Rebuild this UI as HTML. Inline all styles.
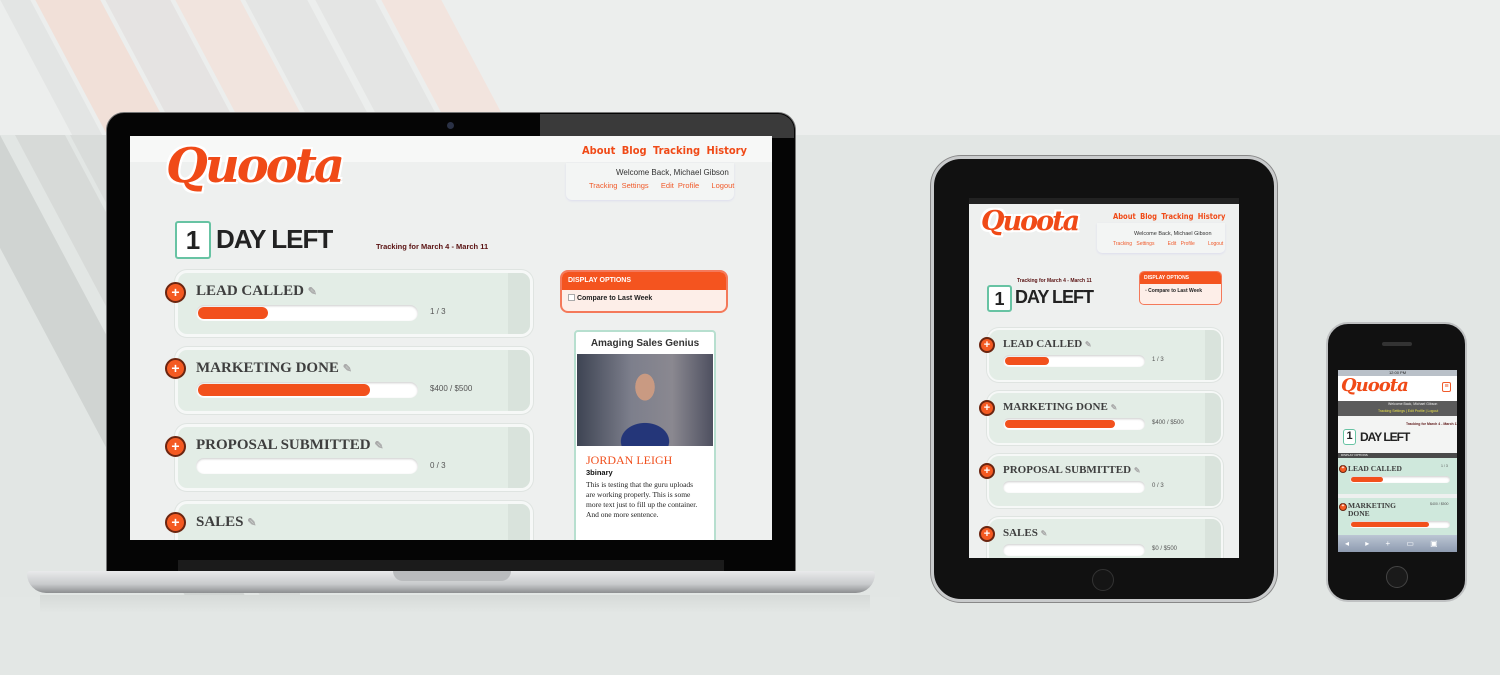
<!DOCTYPE html>
<html><head><meta charset="utf-8"><style>
*{margin:0;padding:0;box-sizing:border-box}
body{width:1500px;height:675px;overflow:hidden;position:relative;background:#e2e6e4;font-family:"Liberation Sans",sans-serif}
.a{position:absolute}
.top{left:0;top:0;width:1500px;height:135px;background:#eceeed;overflow:hidden}
.st{position:absolute;top:-10px;height:160px;transform:skewX(28deg);transform-origin:0 0}
.low{left:0;top:135px;width:300px;height:540px;overflow:hidden}
.logo{font-family:"DejaVu Serif",serif;font-weight:bold;font-style:italic;color:#f04a17;text-shadow:2px 2px 0 #fff,-2px -2px 0 #fff,2px -2px 0 #fff,-2px 2px 0 #fff;letter-spacing:-2px}
.nav{color:#f04a17;font-weight:bold;font-family:"DejaVu Sans Condensed","Liberation Sans",sans-serif}
.card{position:absolute;background:#e3ede6;border:3px solid #f6f8f7;border-radius:12px;box-shadow:0 0 0 1px #dfe4e1}
.card .strip{position:absolute;right:0;top:0;bottom:0;background:#d9e3dc;border-radius:0 9px 9px 0}
.plus{position:absolute;border-radius:50%;background:#f45a22;border:2px solid #6b2510;color:#fff;font-weight:bold;text-align:center}
.tt{position:absolute;font-family:"Liberation Serif",serif;font-weight:bold;color:#3e3e3e;white-space:nowrap}
.bar{position:absolute;background:#fff;border-radius:8px;box-shadow:inset 0 1px 2px #ccc}
.fill{position:absolute;left:2px;top:2px;bottom:2px;background:#f2501c;border-radius:6px}
.val{position:absolute;color:#555;white-space:nowrap}
.one{position:absolute;background:#fff;border:2px solid #67c3a3;border-radius:3px;font-weight:bold;color:#222;text-align:center}
.dl{position:absolute;font-weight:bold;color:#222;white-space:nowrap;letter-spacing:-1px}
</style></head><body>
<div class="a top">
 <div class="st" style="left:-5px;width:30px;background:#e3e5e4"></div>
 <div class="st" style="left:30px;width:65px;background:#f1e0d8"></div>
 <div class="st" style="left:100px;width:65px;background:#e5e3e2"></div>
 <div class="st" style="left:170px;width:65px;background:#f1e4de"></div>
 <div class="st" style="left:240px;width:62px;background:#e4e5e4"></div>
 <div class="st" style="left:310px;width:60px;background:#e4e5e4"></div>
 <div class="st" style="left:376px;width:60px;background:#f2e4de"></div>
</div>
<div class="a low">
 <div class="st" style="left:-60px;top:0;width:60px;height:560px;background:#d0d4d2"></div>
 <div class="st" style="left:15px;top:0;width:50px;height:560px;background:#d7dad8"></div>
 <div class="st" style="left:70px;top:0;width:60px;height:560px;background:#d9dcda"></div>
</div>
<div class="a" style="left:0;top:597px;width:900px;height:78px;background:#e3e7e5"></div>

<!-- LAPTOP -->
<div class="a" style="left:106px;top:112px;width:690px;height:460px;background:#050505;border-radius:18px 18px 0 0;border:1px solid #777"></div>
<div class="a" style="left:540px;top:114px;width:254px;height:24px;background:#3a3a3a;border-radius:0 16px 0 0"></div>
<div class="a" style="left:447px;top:122px;width:7px;height:7px;border-radius:50%;background:#2a3145"></div>
<div class="a" style="left:178px;top:560px;width:546px;height:12px;background:#1b1b1b"></div>
<div class="a" style="left:27px;top:571px;width:848px;height:22px;background:linear-gradient(#e9eaeb,#c8cacc 60%,#8c8e90);border-radius:3px 3px 20px 20px"></div>
<div class="a" style="left:393px;top:571px;width:118px;height:10px;background:#b9bbbd;border-radius:0 0 10px 10px"></div>
<div class="a" style="left:40px;top:595px;width:830px;height:18px;background:linear-gradient(#d6dad8,#e3e7e5)"></div>

<div class="a" style="left:130px;top:136px;width:642px;height:404px;background:#eef0ef;overflow:hidden">
 <div class="a" style="left:0;top:0;width:642px;height:26px;background:#f7f8f7"></div>
 <div class="a logo" style="left:36px;top:2px;font-size:48px;letter-spacing:-3px">Quoota</div>
 <div class="a nav" style="left:452px;top:8px;font-size:11px;word-spacing:3px">About Blog Tracking History</div>
 <div class="a" style="left:436px;top:27px;width:168px;height:37px;background:#f3f5f4;border-radius:0 0 6px 6px;box-shadow:0 1px 2px #dde"></div>
 <div class="a" style="left:486px;top:32px;font-size:8px;color:#333">Welcome Back, Michael Gibson</div>
 <div class="a" style="left:459px;top:45px;font-size:7.5px;color:#f05a2a;word-spacing:2px">Tracking Settings &nbsp; Edit Profile &nbsp; Logout</div>
 <div class="one" style="left:45px;top:85px;width:36px;height:38px;font-size:26px;line-height:34px">1</div>
 <div class="dl" style="left:86px;top:88px;font-size:26px">DAY LEFT</div>
 <div class="a" style="left:246px;top:106px;font-size:7.5px;font-weight:bold;color:#5a1212">Tracking for March 4 - March 11</div>

 <div class="card" style="left:45px;top:134px;width:358px;height:67px"><div class="strip" style="width:22px"></div></div>
 <div class="plus" style="left:35px;top:146px;width:21px;height:21px;font-size:14px;line-height:16px">+</div>
 <div class="tt" style="left:66px;top:147px;font-size:15px">LEAD CALLED <span style="color:#aaa;font-size:11px">✎</span></div>
 <div class="bar" style="left:66px;top:169px;width:222px;height:16px"><div class="fill" style="width:70px"></div></div>
 <div class="val" style="left:300px;top:171px;font-size:8px">1 / 3</div>

 <div class="card" style="left:45px;top:211px;width:358px;height:67px"><div class="strip" style="width:22px"></div></div>
 <div class="plus" style="left:35px;top:222px;width:21px;height:21px;font-size:14px;line-height:16px">+</div>
 <div class="tt" style="left:66px;top:224px;font-size:15px">MARKETING DONE <span style="color:#aaa;font-size:11px">✎</span></div>
 <div class="bar" style="left:66px;top:246px;width:222px;height:16px"><div class="fill" style="width:172px"></div></div>
 <div class="val" style="left:300px;top:248px;font-size:8px">$400 / $500</div>

 <div class="card" style="left:45px;top:288px;width:358px;height:67px"><div class="strip" style="width:22px"></div></div>
 <div class="plus" style="left:35px;top:300px;width:21px;height:21px;font-size:14px;line-height:16px">+</div>
 <div class="tt" style="left:66px;top:301px;font-size:15px">PROPOSAL SUBMITTED <span style="color:#aaa;font-size:11px">✎</span></div>
 <div class="bar" style="left:66px;top:322px;width:222px;height:16px"></div>
 <div class="val" style="left:300px;top:325px;font-size:8px">0 / 3</div>

 <div class="card" style="left:45px;top:365px;width:358px;height:67px"><div class="strip" style="width:22px"></div></div>
 <div class="plus" style="left:35px;top:376px;width:21px;height:21px;font-size:14px;line-height:16px">+</div>
 <div class="tt" style="left:66px;top:378px;font-size:15px">SALES <span style="color:#aaa;font-size:11px">✎</span></div>

 <div class="a" style="left:430px;top:134px;width:168px;height:43px;background:#fdeee8;border:2px solid #f4795a;border-radius:8px;overflow:hidden">
  <div style="background:#f4541f;height:18px;color:#fff;font-size:7px;font-weight:bold;padding:5px 6px">DISPLAY OPTIONS</div>
  <div style="font-size:7px;font-weight:bold;color:#222;padding:4px 6px"><span style="display:inline-block;width:7px;height:7px;border:1px solid #aaa;background:#fff;vertical-align:-1px"></span> Compare to Last Week</div>
 </div>

 <div class="a" style="left:444px;top:194px;width:142px;height:220px;background:#fff;border:2px solid #b7dfcf;border-radius:4px">
  <div style="text-align:center;font-size:10px;font-weight:bold;color:#333;padding-top:6px;height:22px">Amaging Sales Genius</div>
  <div style="margin:0 1px;height:92px;background:radial-gradient(ellipse 16px 22px at 50% 36%,#c99a82 60%,transparent 62%),radial-gradient(ellipse 34px 26px at 50% 95%,#243679 70%,transparent 72%),linear-gradient(90deg,#3e4453,#7d7f8c 40%,#8a8890 70%,#4e5060)"></div>
  <div style="font-family:'Liberation Serif',serif;color:#f0501e;font-size:12px;padding:7px 10px 0">JORDAN LEIGH</div>
  <div style="font-size:7.5px;font-weight:bold;color:#111;padding:0 10px">3binary</div>
  <div style="font-family:'Liberation Serif',serif;font-size:7.5px;line-height:10px;color:#222;padding:3px 10px">This is testing that the guru uploads are working properly. This is some more text just to fill up the container. And one more sentence.</div>
 </div>
</div>

<!-- TABLET -->
<div class="a" style="left:931px;top:156px;width:346px;height:446px;background:#111;border-radius:30px;border:3px solid #c9cbcc;box-shadow:0 0 0 1px #888"></div>
<div class="a" style="left:1092px;top:569px;width:22px;height:22px;border-radius:50%;background:#151515;border:1px solid #333"></div>
<div class="a" style="left:969px;top:198px;width:270px;height:360px;background:#eef0ef;overflow:hidden">
 <div class="a" style="left:0;top:0;width:270px;height:6px;background:#222"></div>
 <div class="a logo" style="left:12px;top:8px;font-size:27px;letter-spacing:-2px">Quoota</div>
 <div class="a nav" style="left:144px;top:14px;font-size:7.5px;word-spacing:2px">About Blog Tracking History</div>
 <div class="a" style="left:128px;top:25px;width:128px;height:30px;background:#f3f5f4;border-radius:0 0 5px 5px;box-shadow:0 1px 2px #dde"></div>
 <div class="a" style="left:165px;top:33px;font-size:5.5px;color:#333">Welcome Back, Michael Gibson</div>
 <div class="a" style="left:144px;top:43px;font-size:5px;color:#f05a2a;word-spacing:3px">Tracking Settings &nbsp; Edit Profile &nbsp; Logout</div>
 <div class="a" style="left:48px;top:80px;font-size:5px;font-weight:bold;color:#5a1212">Tracking for March 4 - March 11</div>
 <div class="a" style="left:170px;top:73px;width:83px;height:34px;background:#fdeee8;border:1px solid #f4795a;border-radius:5px;overflow:hidden">
  <div style="background:#f4541f;height:12px;color:#fff;font-size:5px;font-weight:bold;padding:3px 4px">DISPLAY OPTIONS</div>
  <div style="font-size:5px;font-weight:bold;color:#222;padding:4px 5px">▫ Compare to Last Week</div>
 </div>
 <div class="one" style="left:18px;top:87px;width:25px;height:27px;font-size:18px;line-height:24px">1</div>
 <div class="dl" style="left:46px;top:89px;font-size:18px">DAY LEFT</div>

 <div class="card" style="left:18px;top:130px;width:236px;height:54px;border-width:2px"><div class="strip" style="width:16px"></div></div>
 <div class="plus" style="left:10px;top:139px;width:16px;height:16px;font-size:11px;line-height:12px">+</div>
 <div class="tt" style="left:34px;top:140px;font-size:11px">LEAD CALLED <span style="color:#aaa;font-size:8px">✎</span></div>
 <div class="bar" style="left:34px;top:157px;width:142px;height:12px"><div class="fill" style="width:44px"></div></div>
 <div class="val" style="left:183px;top:159px;font-size:6px">1 / 3</div>

 <div class="card" style="left:18px;top:193px;width:236px;height:54px;border-width:2px"><div class="strip" style="width:16px"></div></div>
 <div class="plus" style="left:10px;top:202px;width:16px;height:16px;font-size:11px;line-height:12px">+</div>
 <div class="tt" style="left:34px;top:203px;font-size:11px">MARKETING DONE <span style="color:#aaa;font-size:8px">✎</span></div>
 <div class="bar" style="left:34px;top:220px;width:142px;height:12px"><div class="fill" style="width:110px"></div></div>
 <div class="val" style="left:183px;top:222px;font-size:6px">$400 / $500</div>

 <div class="card" style="left:18px;top:256px;width:236px;height:54px;border-width:2px"><div class="strip" style="width:16px"></div></div>
 <div class="plus" style="left:10px;top:265px;width:16px;height:16px;font-size:11px;line-height:12px">+</div>
 <div class="tt" style="left:34px;top:266px;font-size:11px">PROPOSAL SUBMITTED <span style="color:#aaa;font-size:8px">✎</span></div>
 <div class="bar" style="left:34px;top:283px;width:142px;height:12px"></div>
 <div class="val" style="left:183px;top:285px;font-size:6px">0 / 3</div>

 <div class="card" style="left:18px;top:319px;width:236px;height:54px;border-width:2px"><div class="strip" style="width:16px"></div></div>
 <div class="plus" style="left:10px;top:328px;width:16px;height:16px;font-size:11px;line-height:12px">+</div>
 <div class="tt" style="left:34px;top:329px;font-size:11px">SALES <span style="color:#aaa;font-size:8px">✎</span></div>
 <div class="bar" style="left:34px;top:346px;width:142px;height:12px"></div>
 <div class="val" style="left:183px;top:348px;font-size:6px">$0 / $500</div>
</div>

<!-- PHONE -->
<div class="a" style="left:1326px;top:322px;width:141px;height:280px;background:#111;border-radius:22px;border:2px solid #bfc1c2"></div>
<div class="a" style="left:1382px;top:342px;width:30px;height:4px;border-radius:2px;background:#333"></div>
<div class="a" style="left:1386px;top:566px;width:22px;height:22px;border-radius:50%;background:#1a1a1a;border:1px solid #444"></div>
<div class="a" style="left:1338px;top:370px;width:119px;height:182px;background:#eef0ef;overflow:hidden">
 <div class="a" style="left:0;top:0;width:119px;height:6px;background:#b9c0c8;font-size:4px;color:#222;text-align:center">12:00 PM</div>
 <div class="a" style="left:0;top:6px;width:119px;height:25px;background:#fff"></div>
 <div class="a logo" style="left:3px;top:5px;font-size:18px;letter-spacing:-1px;text-shadow:none">Quoota</div>
 <div class="a" style="left:104px;top:12px;width:9px;height:10px;border:1px solid #f05a2a;border-radius:2px;color:#f05a2a;font-size:7px;line-height:7px;text-align:center">≡</div>
 <div class="a" style="left:0;top:31px;width:119px;height:15px;background:#5b5b5b"></div>
 <div class="a" style="left:50px;top:32px;font-size:3.5px;color:#eee">Welcome Back, Michael Gibson</div>
 <div class="a" style="left:40px;top:39px;font-size:3.5px;color:#e8e04a">Tracking Settings | Edit Profile | Logout</div>
 <div class="a" style="left:0;top:46px;width:119px;height:37px;background:#f3f4f3"></div>
 <div class="a" style="left:68px;top:52px;font-size:3.5px;color:#5a1212;font-weight:bold;white-space:nowrap">Tracking for March 4 - March 11</div>
 <div class="one" style="left:5px;top:59px;width:13px;height:16px;font-size:11px;line-height:13px;border-width:1px">1</div>
 <div class="dl" style="left:22px;top:60px;font-size:12px">DAY LEFT</div>
 <div class="a" style="left:0;top:83px;width:119px;height:5px;background:#4a4a4a;font-size:3px;color:#fff;padding-left:3px">DISPLAY OPTIONS</div>
 <div class="a" style="left:0;top:88px;width:119px;height:36px;background:#cfe8dc"></div>
 <div class="plus" style="left:1px;top:95px;width:8px;height:8px;border-width:1px;font-size:5px;line-height:5px">+</div>
 <div class="tt" style="left:10px;top:94px;font-size:7.5px">LEAD CALLED</div>
 <div class="val" style="left:103px;top:94px;font-size:3.5px">1 / 3</div>
 <div class="bar" style="left:12px;top:106px;width:100px;height:7px;border-radius:4px"><div class="fill" style="width:32px;left:1px;top:1px;bottom:1px"></div></div>
 <div class="a" style="left:0;top:128px;width:119px;height:40px;background:#cfe8dc"></div>
 <div class="plus" style="left:1px;top:133px;width:8px;height:8px;border-width:1px;font-size:5px;line-height:5px">+</div>
 <div class="tt" style="left:10px;top:132px;font-size:7.5px;line-height:8px">MARKETING<br>DONE</div>
 <div class="val" style="left:92px;top:132px;font-size:3.5px">$400 / $500</div>
 <div class="bar" style="left:12px;top:151px;width:100px;height:7px;border-radius:4px"><div class="fill" style="width:78px;left:1px;top:1px;bottom:1px"></div></div>
 <div class="a" style="left:0;top:165px;width:119px;height:17px;background:linear-gradient(#bcc6d4,#8e9bb0);color:#fff;font-size:8px;line-height:17px;word-spacing:14px;padding-left:7px">◂ ▸ + ▭ ▣</div>
</div>
</body></html>
